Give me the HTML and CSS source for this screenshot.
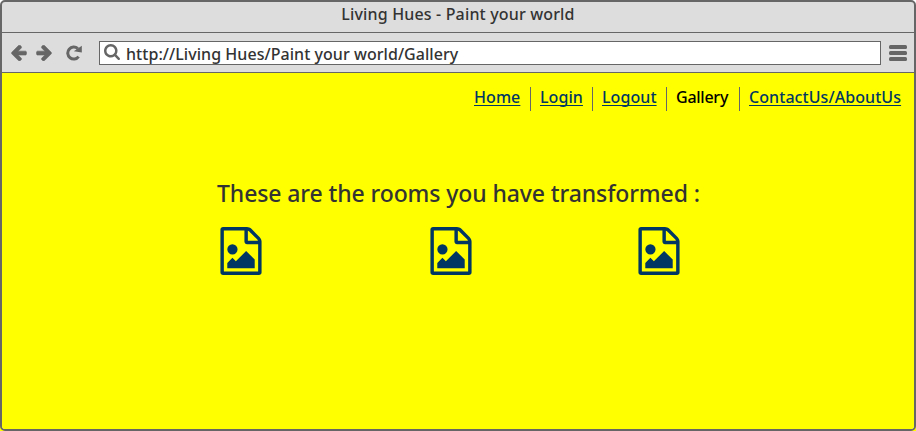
FILE: index.html
```html
<!DOCTYPE html>
<html lang="en">
<head>
<meta charset="utf-8">
<title>Living Hues - Paint your world</title>
<link rel="stylesheet" href="styles.css">
</head>
<body>
<svg class="defs" width="0" height="0" aria-hidden="true">
  <symbol id="arrow" viewBox="192 165 1472 1574"><path d="M1664 896v128q0 53-32.5 90.5t-84.5 37.5h-704l293 294q38 36 38 90t-38 90l-75 76q-37 37-90 37-52 0-91-37l-651-652q-37-37-37-90 0-52 37-91l651-650q38-38 91-38 52 0 90 38l75 74q38 38 38 91t-38 91l-293 293h704q52 0 84.5 37.5t32.5 90.5z"/></symbol>
  <symbol id="search" viewBox="64 128 1664 1664"><path d="M1216 832q0-185-131.5-316.5t-316.5-131.5-316.5 131.5-131.5 316.5 131.5 316.5 316.5 131.5 316.5-131.5 131.5-316.5zm512 832q0 52-38 90t-90 38q-54 0-90-38l-343-342q-179 124-399 124-143 0-273.5-55.5t-225-150-150-225-55.5-273.5 55.5-273.5 150-225 225-150 273.5-55.5 273.5 55.5 225 150 150 225 55.5 273.5q0 220-124 399l343 343q37 37 37 90z"/></symbol>
  <symbol id="image-file" viewBox="0 0 1536 1792"><path d="M1468 380q28 28 48 76t20 88v1152q0 40-28 68t-68 28h-1344q-40 0-68-28t-28-68v-1600q0-40 28-68t68-28h896q40 0 88 20t76 48zm-444-244v376h376q-10-29-22-41l-313-313q-12-12-41-22zm384 1528v-1024h-416q-40 0-68-28t-28-68v-416h-768v1536h1280zm-128-448v320h-1024v-192l192-192 128 128 384-384zm-832-192q-80 0-136-56t-56-136 56-136 136-56 136 56 56 136-56 136-136 56z"/></symbol>
</svg>
<div class="window">
  <header class="titlebar">Living Hues - Paint your world</header>
  <div class="toolbar">
    <svg class="icon back"><use href="#arrow"/></svg>
    <svg class="icon forward"><use href="#arrow"/></svg>
    <svg class="icon reload" viewBox="0 0 16 16"><path class="ring" d="M12 3.6A6 6 0 1 0 12.8 11.6"/><path d="M16 .8V7.4L8 6.2Z"/></svg>
    <div class="address">
      <svg class="icon search"><use href="#search"/></svg>
      <span class="url">http://Living Hues/Paint your world/Gallery</span>
    </div>
    <svg class="icon menu" viewBox="0 0 18 16"><rect width="18" height="4" rx="1.5"/><rect y="6" width="18" height="4" rx="1.5"/><rect y="12" width="18" height="4" rx="1.5"/></svg>
  </div>
  <main class="page">
    <nav class="nav">
      <span class="item home"><a>Home</a></span>
      <span class="item login"><a>Login</a></span>
      <span class="item logout"><a>Logout</a></span>
      <span class="item gallery"><b>Gallery</b></span>
      <span class="item contact"><a>ContactUs/AboutUs</a></span>
    </nav>
    <h1 class="heading">These are the rooms you have transformed :</h1>
    <div class="rooms">
      <svg class="room"><use href="#image-file"/></svg>
      <svg class="room"><use href="#image-file"/></svg>
      <svg class="room"><use href="#image-file"/></svg>
    </div>
  </main>
</div>
</body>
</html>
```
FILE: styles.css
```css
* { box-sizing: border-box; }
body {
  margin: 0;
  background: linear-gradient(#fff 50%, #ff0 50%);
  font: 500 16px/24px "Noto Sans", "Open Sans", sans-serif;
  color: #333;
}
.defs { display: block; }
svg { flex: none; }
.window {
  display: flex;
  flex-direction: column;
  height: 431px;
  border: 2px solid #666;
  border-radius: 5px;
  overflow: hidden;
  background: #ddd;
}
.titlebar {
  height: 31px;
  border-bottom: 1px solid #666;
  text-align: center;
  letter-spacing: 0.16px;
  white-space: nowrap;
}
.toolbar {
  display: flex;
  align-items: center;
  height: 40px;
  border-bottom: 1px solid #666;
  padding-left: 9px;
}
.icon { fill: #666; }
.back, .forward {
  width: 16px;
  height: 16px;
  stroke: #666;
  stroke-width: 60px;
  overflow: visible;
}
.forward { transform: scaleX(-1); margin-left: 9px; }
.reload { width: 16px; height: 16px; margin-left: 14px; }
.ring { fill: none; stroke: #666; stroke-width: 3px; }
.reload path { transform: translate(-0.2px, 0); }
.address {
  display: flex;
  align-items: center;
  width: 782px;
  height: 24px;
  margin-left: 17px;
  padding-left: 4px;
  border: 1px solid #666;
  background: #fff;
}
.search { width: 16px; height: 16px; margin: 0 6px 1px 0; }
.url { padding-top: 2px; letter-spacing: 0.05px; white-space: nowrap; }
.menu { width: 18px; height: 16px; margin-left: 8px; }
.page { flex: 1; background: #ff0; }
.nav {
  display: flex;
  justify-content: flex-end;
  padding: 14px 4px 0 0;
}
.item {
  height: 24px;
  line-height: 20px;
  padding-left: 9px;
  border-right: 1px solid #666;
  white-space: nowrap;
}
.item a {
  color: #003763;
  letter-spacing: 0.07px;
  text-decoration: underline 1px;
  text-underline-offset: 2px;
  text-decoration-skip-ink: none;
}
.item b { color: #000; font-weight: 550; letter-spacing: -0.25px; }
.home { width: 66px; }
.login { width: 62px; }
.logout { width: 74px; }
.gallery { width: 73px; }
.contact { width: 170px; border: 0; }
.heading {
  margin: 66px 0 0 215px;
  font-size: 23px;
  font-weight: 500;
  line-height: 32px;
  letter-spacing: -0.1px;
  white-space: nowrap;
}
.rooms {
  display: grid;
  grid-template-columns: 210px 208px 42px;
  margin: 18px 0 0 218px;
}
.room { width: 42px; height: 48px; fill: #003763; }
```
